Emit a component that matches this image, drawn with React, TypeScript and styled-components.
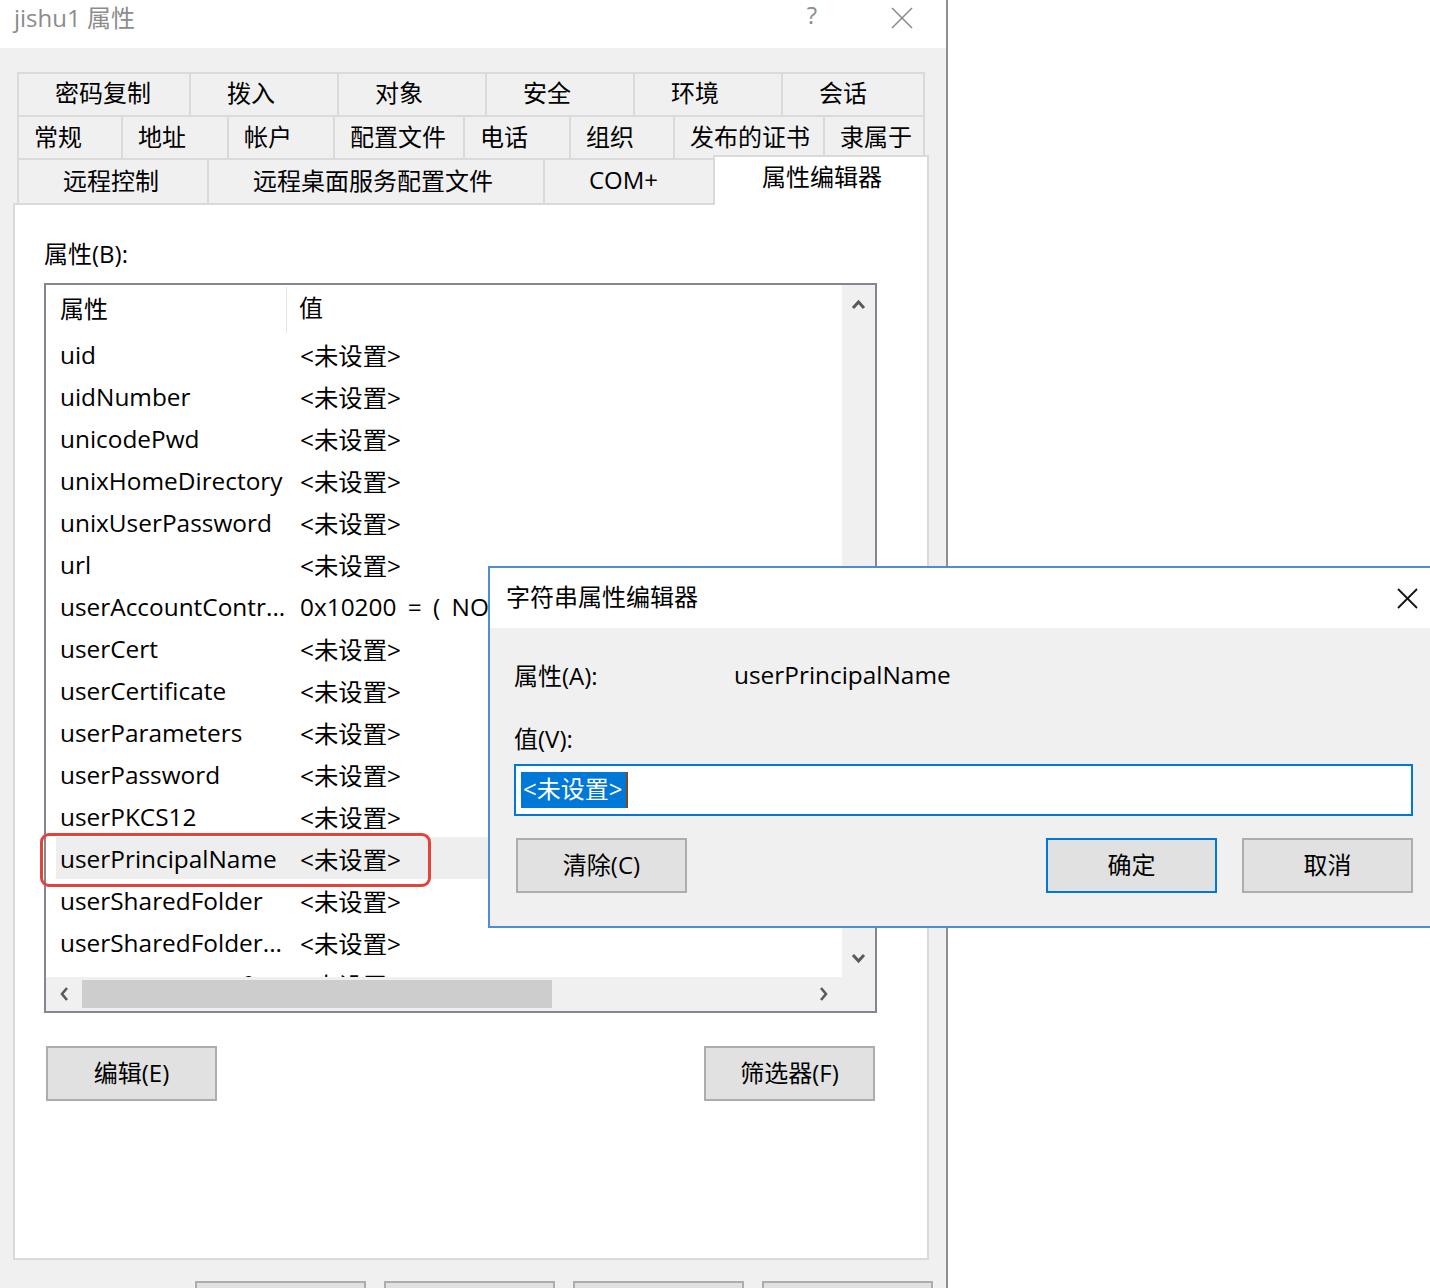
import React from "react";
import styled, { createGlobalStyle } from "styled-components";

const FONT = `"Open Sans", "Noto Sans CJK SC", sans-serif`;

const GlobalStyle = createGlobalStyle`
  html, body { margin: 0; padding: 0; background: #fff; }
  body { font-family: ${FONT}; color: #000; }
  * { box-sizing: border-box; }
`;

const Root = styled.div`
  position: relative;
  width: 1430px;
  height: 1288px;
  overflow: hidden;
  background: #fff;
`;

const MainWindow = styled.div`
  width: 948px;
  height: 1288px;
  display: flex;
  flex-direction: column;
  border-right: 2px solid #8f8f8f;
  background: #f0f0f0;
`;

const TitleBar = styled.div`
  height: 48px;
  flex-shrink: 0;
  background: #fff;
  display: flex;
  align-items: flex-start;
  padding: 2px 24px 0 14px;
`;

const TitleText = styled.div`
  flex: 1;
  font-size: 24px;
  line-height: 32px;
  color: #8c8c8c;
`;

const HelpGlyph = styled.div`
  width: 30px;
  text-align: center;
  font-size: 24px;
  line-height: 26px;
  color: #8c8c8c;
  margin-right: 55px;
`;

const CloseBox = styled.div<{ $w: number; $h: number }>`
  width: ${(p) => p.$w}px;
  height: ${(p) => p.$h}px;
  display: flex;
  align-items: center;
  justify-content: center;
`;

const Body = styled.div`
  flex: 1;
  display: flex;
  flex-direction: column;
  padding: 24px 17px 0 13px;
`;

const TabStrip = styled.div`
  display: flex;
  flex-direction: column;
  margin-left: 4px;
`;

const TabRow = styled.div<{ $h: number }>`
  display: flex;
  height: ${(p) => p.$h}px;
`;

const Tab = styled.div<{ $w: number; $pl: number; $shift: number }>`
  width: ${(p) => p.$w}px;
  flex-shrink: 0;
  display: flex;
  align-items: center;
  justify-content: flex-start;
  padding-left: ${(p) => p.$pl - 2}px;
  padding-bottom: ${(p) => p.$shift}px;
  font-size: 24px;
  white-space: nowrap;
  border-top: 2px solid #dadada;
  border-left: 2px solid #dadada;
  background: #f0f0f0;
  &:last-child {
    border-right: 2px solid #dadada;
  }
`;

const ActiveTab = styled.div<{ $w: number }>`
  position: relative;
  z-index: 2;
  width: ${(p) => p.$w}px;
  height: 50px;
  margin-top: -3px;
  flex-shrink: 0;
  display: flex;
  align-items: center;
  padding: 0 0 11px 47px;
  font-size: 24px;
  background: #fff;
  border: 2px solid #dadada;
  border-bottom: none;
`;

const Panel = styled.div`
  height: 1057px;
  flex-shrink: 0;
  background: #fff;
  border: 2px solid #dadada;
  padding: 0 0 0 29px;
  display: flex;
  flex-direction: column;
`;

const FieldLabel = styled.div`
  font-size: 24px;
  line-height: 28px;
  margin-top: 35px;
`;

const ListBox = styled.div`
  position: relative;
  margin-top: 15px;
  width: 833px;
  height: 730px;
  border: 2px solid #828790;
  display: grid;
  grid-template-columns: 1fr 33px;
  grid-template-rows: 1fr 34px;
  background: #fff;
`;

const ListContent = styled.div`
  overflow: hidden;
  display: flex;
  flex-direction: column;
`;

const HeaderRow = styled.div`
  height: 48px;
  flex-shrink: 0;
  display: flex;
  align-items: stretch;
  font-size: 24px;
`;

const HeaderCell = styled.div<{ $w?: number; $pl: number; $divider?: boolean }>`
  ${(p) => (p.$w ? `width: ${p.$w}px; flex-shrink: 0;` : "flex: 1;")}
  padding-left: ${(p) => p.$pl}px;
  display: flex;
  align-items: center;
  padding-bottom: 6px;
  ${(p) => (p.$divider ? `border-right: 1px solid #e3e3e3; margin-top: 2px;` : "")}
`;

const Row = styled.div<{ $selected?: boolean }>`
  height: 42px;
  flex-shrink: 0;
  display: flex;
  align-items: center;
  margin-left: 10px;
  font-size: 24.4px;
  white-space: nowrap;
  background: ${(p) => (p.$selected ? "#eeeeee" : "transparent")};
`;

const NameCell = styled.div`
  width: 231px;
  flex-shrink: 0;
  padding-left: 4px;
  overflow: hidden;
`;

const ValueCell = styled.div`
  padding-left: 13px;
  white-space: nowrap;
  word-spacing: 5px;
`;

const VScroll = styled.div`
  background: #f0f0f0;
  display: flex;
  flex-direction: column;
  justify-content: space-between;
  position: relative;
`;

const VThumb = styled.div`
  position: absolute;
  left: 1px;
  right: 1px;
  top: 330px;
  height: 300px;
  background: #cdcdcd;
`;

const HScroll = styled.div`
  background: #f0f0f0;
  display: flex;
  align-items: center;
`;

const HThumb = styled.div`
  width: 470px;
  height: 28px;
  background: #cdcdcd;
`;

const HSpacer = styled.div`
  flex: 1;
`;

const Corner = styled.div`
  background: #f0f0f0;
`;

const Annotation = styled.div`
  position: absolute;
  left: -6px;
  top: 548px;
  width: 391px;
  height: 54px;
  border: 3px solid #e2443a;
  border-radius: 9px;
  pointer-events: none;
`;

const ButtonRow = styled.div`
  width: 829px;
  margin: 33px 0 0 2px;
  display: flex;
  justify-content: space-between;
`;

const Button = styled.div<{ $default?: boolean }>`
  width: 171px;
  height: 55px;
  flex-shrink: 0;
  background: #e1e1e1;
  border: 2px solid ${(p) => (p.$default ? "#0078d7" : "#adadad")};
  display: flex;
  align-items: center;
  justify-content: center;
  padding-bottom: 4px;
  font-size: 24px;
`;

const BottomButtons = styled.div`
  display: flex;
  gap: 18px;
  margin: 21px 0 0 182px;
`;

const Dialog = styled.div`
  position: absolute;
  left: 488px;
  top: 566px;
  width: 950px;
  height: 362px;
  border: 2px solid #4a8ed8;
  background: #f0f0f0;
  display: flex;
  flex-direction: column;
  z-index: 5;
`;

const DialogTitleBar = styled.div`
  height: 60px;
  flex-shrink: 0;
  background: #fff;
  display: flex;
  align-items: center;
  padding-left: 16px;
`;

const DialogTitle = styled.div`
  flex: 1;
  font-size: 24px;
  padding-bottom: 6px;
`;

const DialogBody = styled.div`
  padding: 0 23px 0 24px;
  display: flex;
  flex-direction: column;
`;

const InfoRow = styled.div<{ $mt: number }>`
  display: flex;
  align-items: center;
  height: 32px;
  margin-top: ${(p) => p.$mt}px;
  padding-bottom: 4px;
  font-size: 24px;
`;

const InfoLabel = styled.div`
  width: 220px;
  flex-shrink: 0;
`;

const InfoValue = styled.span`
  font-size: 24.4px;
`;

const TextInput = styled.div`
  margin-top: 9px;
  height: 52px;
  background: #fff;
  border: 2px solid #0078d7;
  display: flex;
  align-items: center;
  padding-left: 5px;
`;

const Selection = styled.span`
  background: #0078d7;
  color: #fff;
  font-size: 24px;
  height: 36px;
  line-height: 34px;
  padding: 0 4px 0 2px;
`;

const Caret = styled.span`
  width: 2px;
  height: 36px;
  background: #7a4a20;
`;

const DialogButtons = styled.div`
  display: flex;
  margin-top: 22px;
  padding-left: 2px;
`;

const RightGroup = styled.div`
  margin-left: auto;
  display: flex;
  gap: 25px;
`;

const Chevron = ({ dir }: { dir: "up" | "down" | "left" | "right" }) => {
  const pts: Record<string, string> = {
    up: "2,10 7.5,4 13,10",
    down: "2,3 7.5,9 13,3",
    left: "9,1 4,7 9,13",
    right: "4,1 9,7 4,13",
  };
  const vertical = dir === "up" || dir === "down";
  return (
    <svg width={vertical ? 15 : 13} height={vertical ? 13 : 14} viewBox={vertical ? "0 0 15 13" : "0 0 13 14"}>
      <polyline points={pts[dir]} fill="none" stroke="#5a5a5a" strokeWidth={vertical ? 3 : 2.6} />
    </svg>
  );
};

const ArrowCell = styled.div<{ $w: number; $h: number }>`
  width: ${(p) => p.$w}px;
  height: ${(p) => p.$h}px;
  flex-shrink: 0;
  display: flex;
  align-items: center;
  justify-content: center;
`;

const XIcon = ({ size, color, w }: { size: number; color: string; w: number }) => (
  <svg width={size} height={size} viewBox={`0 0 ${size} ${size}`}>
    <line x1={1} y1={1} x2={size - 1} y2={size - 1} stroke={color} strokeWidth={w} />
    <line x1={size - 1} y1={1} x2={1} y2={size - 1} stroke={color} strokeWidth={w} />
  </svg>
);

const row1 = [
  ["密码复制", 172],
  ["拨入", 148],
  ["对象", 148],
  ["安全", 148],
  ["环境", 148],
  ["会话", 144],
] as const;

const row2 = [
  ["常规", 104],
  ["地址", 106],
  ["帐户", 106],
  ["配置文件", 130],
  ["电话", 106],
  ["组织", 104],
  ["发布的证书", 150],
  ["隶属于", 102],
] as const;

const row3 = [
  ["远程控制", 190],
  ["远程桌面服务配置文件", 336],
  ["COM+", 170],
] as const;

const NOT_SET = "<未设置>";

const rows: { name: string; value: string; selected?: boolean }[] = [
  { name: "uid", value: NOT_SET },
  { name: "uidNumber", value: NOT_SET },
  { name: "unicodePwd", value: NOT_SET },
  { name: "unixHomeDirectory", value: NOT_SET },
  { name: "unixUserPassword", value: NOT_SET },
  { name: "url", value: NOT_SET },
  { name: "userAccountContr...", value: "0x10200 = ( NORMAL_ACCOUNT | DONT_EXPIRE_PASSWORD )" },
  { name: "userCert", value: NOT_SET },
  { name: "userCertificate", value: NOT_SET },
  { name: "userParameters", value: NOT_SET },
  { name: "userPassword", value: NOT_SET },
  { name: "userPKCS12", value: NOT_SET },
  { name: "userPrincipalName", value: NOT_SET, selected: true },
  { name: "userSharedFolder", value: NOT_SET },
  { name: "userSharedFolder...", value: NOT_SET },
  { name: "userSMIMECertifi...", value: NOT_SET },
];

export default function App() {
  return (
    <Root>
      <GlobalStyle />
      <MainWindow>
        <TitleBar>
          <TitleText>jishu1 属性</TitleText>
          <HelpGlyph>?</HelpGlyph>
          <CloseBox $w={40} $h={32}>
            <XIcon size={22} color="#8c8c8c" w={1.6} />
          </CloseBox>
        </TitleBar>
        <Body>
          <TabStrip>
            <TabRow $h={43}>
              {row1.map(([t, w]) => (
                <Tab key={t} $w={w} $pl={38} $shift={6}>{t}</Tab>
              ))}
            </TabRow>
            <TabRow $h={43}>
              {row2.map(([t, w]) => (
                <Tab key={t} $w={w} $pl={17} $shift={4}>{t}</Tab>
              ))}
            </TabRow>
            <TabRow $h={45}>
              {row3.map(([t, w]) => (
                <Tab key={t} $w={w} $pl={46} $shift={4}>{t}</Tab>
              ))}
              <ActiveTab $w={216}>属性编辑器</ActiveTab>
            </TabRow>
          </TabStrip>
          <Panel>
            <FieldLabel>属性(B):</FieldLabel>
            <ListBox>
              <ListContent>
                <HeaderRow>
                  <HeaderCell $w={241} $pl={14} $divider>属性</HeaderCell>
                  <HeaderCell $pl={12}>值</HeaderCell>
                </HeaderRow>
                {rows.map((r) => (
                  <Row key={r.name} $selected={r.selected}>
                    <NameCell>{r.name}</NameCell>
                    <ValueCell>{r.value}</ValueCell>
                  </Row>
                ))}
              </ListContent>
              <VScroll>
                <ArrowCell $w={33} $h={38}>
                  <Chevron dir="up" />
                </ArrowCell>
                <VThumb />
                <ArrowCell $w={33} $h={38}>
                  <Chevron dir="down" />
                </ArrowCell>
              </VScroll>
              <HScroll>
                <ArrowCell $w={36} $h={34}>
                  <Chevron dir="left" />
                </ArrowCell>
                <HThumb />
                <HSpacer />
                <ArrowCell $w={38} $h={34}>
                  <Chevron dir="right" />
                </ArrowCell>
              </HScroll>
              <Corner />
              <Annotation />
            </ListBox>
            <ButtonRow>
              <Button>编辑(E)</Button>
              <Button>筛选器(F)</Button>
            </ButtonRow>
          </Panel>
          <BottomButtons>
            <Button />
            <Button />
            <Button />
            <Button />
          </BottomButtons>
        </Body>
      </MainWindow>

      <Dialog>
        <DialogTitleBar>
          <DialogTitle>字符串属性编辑器</DialogTitle>
          <CloseBox $w={58} $h={58}>
            <XIcon size={21} color="#111" w={1.8} />
          </CloseBox>
        </DialogTitleBar>
        <DialogBody>
          <InfoRow $mt={32}>
            <InfoLabel>属性(A):</InfoLabel>
            <InfoValue>userPrincipalName</InfoValue>
          </InfoRow>
          <InfoRow $mt={31}>
            <InfoLabel>值(V):</InfoLabel>
          </InfoRow>
          <TextInput>
            <Selection>{NOT_SET}</Selection>
            <Caret />
          </TextInput>
          <DialogButtons>
            <Button>清除(C)</Button>
            <RightGroup>
              <Button $default>确定</Button>
              <Button>取消</Button>
            </RightGroup>
          </DialogButtons>
        </DialogBody>
      </Dialog>
    </Root>
  );
}
